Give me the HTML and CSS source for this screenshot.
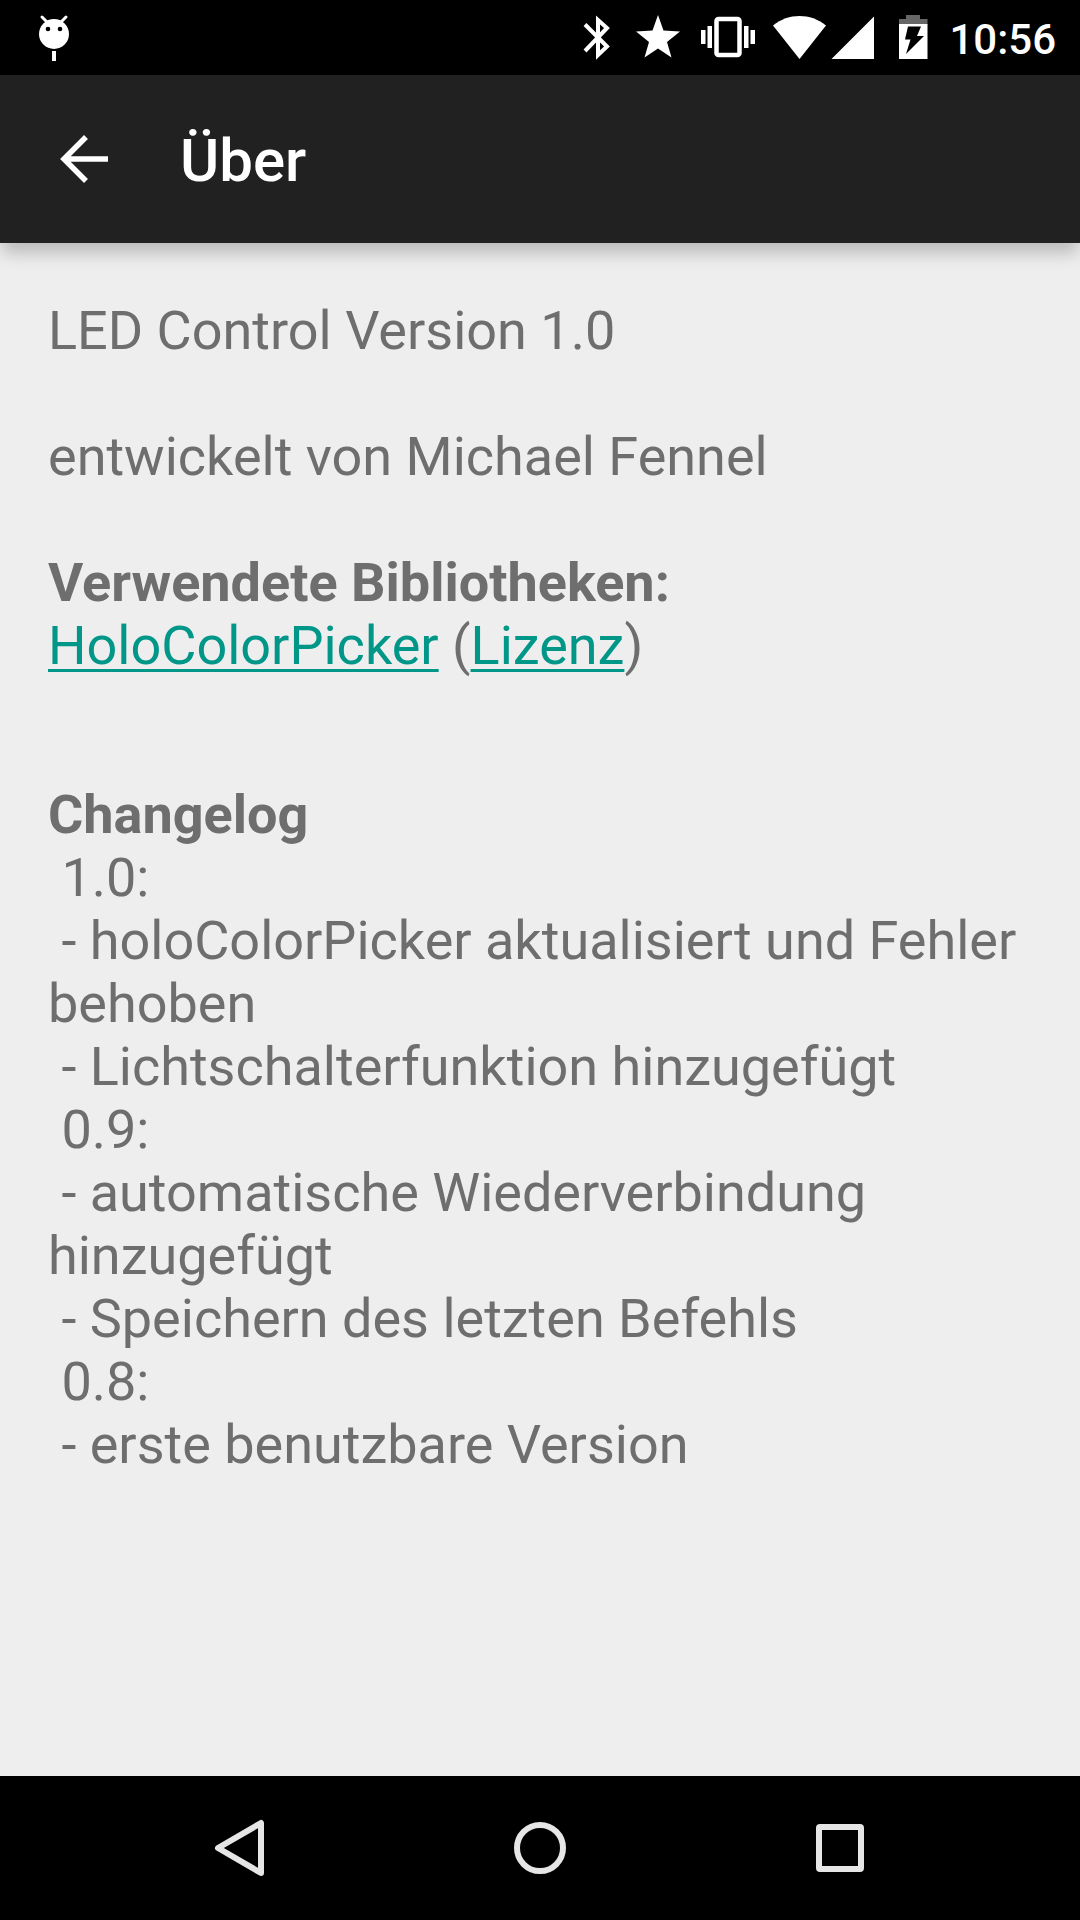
FILE: index.html
```html
<!DOCTYPE html>
<html lang="de">
  <head>
    <meta charset="UTF-8" />
    <meta name="viewport" content="width=device-width, initial-scale=1.0" />
    <title>Über</title>
    <link rel="stylesheet" href="styles.css">
  </head>
  <body>
    <!-- Status bar -->
    <div class="status-bar">
      <svg class="notification" width="32" height="75" viewBox="0 0 32 75" fill="#fff">
        <path d="M4 17l5 5M28 17l-5 5" stroke="#fff" stroke-width="3" stroke-linecap="round" />
        <circle cx="16" cy="34" r="15" />
        <circle cx="10" cy="29" r="2.3" fill="#000" />
        <circle cx="22" cy="29" r="2.3" fill="#000" />
        <rect x="14" y="51" width="4" height="10" />
      </svg>
      <div class="status-icons">
        <svg width="58" height="75" viewBox="0 0 58 75" fill="none" stroke="#fff" stroke-width="4">
          <path d="M17 24.500L39 46.500 30 55V20l9 8L17 51" />
        </svg>
        <svg width="64" height="75" viewBox="0 0 64 75" fill="#fff">
          <path d="M32 15l5.500 15.500L54 31.500 41 42l4.500 15.500L32 48.500 18.500 57.500 23 42 10 31.500 26.500 30.500z" />
        </svg>
        <svg width="74" height="75" viewBox="0 0 74 75" fill="#fff">
          <rect x="26.500" y="19" width="23" height="36" rx="2" fill="none" stroke="#fff" stroke-width="4.500" />
          <rect x="11" y="30" width="4.500" height="14" />
          <rect x="17.500" y="26" width="4.500" height="22" />
          <rect x="54" y="26" width="4.500" height="22" />
          <rect x="60.500" y="30" width="4.500" height="14" />
        </svg>
        <svg width="64" height="75" viewBox="0 0 64 75" fill="#fff">
          <path d="M35.500 59L9 25.500C17 19 26 16 35.500 16S54 19 62 25.500z" />
        </svg>
        <svg width="58" height="75" viewBox="0 0 58 75" fill="#fff">
          <path d="M46 16.500V59H3.500z" />
        </svg>
        <svg width="54" height="75" viewBox="0 0 54 75">
          <path d="M20 15h14v4h7.500v5.500H13V19h7z" fill="#666" />
          <rect x="13" y="24" width="28.500" height="35" fill="#fff" />
          <path d="M22 26.500h13l-4 9.500h7L20 54l4.500-14.500H19z" fill="#000" />
        </svg>
        <span class="clock">10:56</span>
      </div>
    </div>

    <!-- App bar -->
    <header class="app-bar">
      <button class="back" aria-label="Zurück">
        <svg width="48" height="48" viewBox="0 0 48 48" fill="none" stroke="#fff" stroke-width="5.500">
          <path d="M48 24H4M26 2L4 24l22 22" />
        </svg>
      </button>
      <h1>Über</h1>
    </header>

    <main class="content">
      <section class="about">
        <p>LED Control Version 1.0</p>
        <p>entwickelt von Michael Fennel</p>
        <h2>Verwendete Bibliotheken:</h2>
        <div><a href="#">HoloColorPicker</a> (<a href="#">Lizenz</a>)</div>
      </section>

      <section class="changelog">
        <h2>Changelog</h2>
        <div class="entry"> 1.0:</div>
        <div class="entry"> - holoColorPicker aktualisiert und Fehler behoben</div>
        <div class="entry"> - Lichtschalterfunktion hinzugefügt</div>
        <div class="entry"> 0.9:</div>
        <div class="entry"> - automatische Wiederverbindung hinzugefügt</div>
        <div class="entry"> - Speichern des letzten Befehls</div>
        <div class="entry"> 0.8:</div>
        <div class="entry"> - erste benutzbare Version</div>
      </section>
    </main>

    <!-- Navigation bar -->
    <nav class="nav-bar">
      <button aria-label="Zurück">
        <svg width="60" height="60" viewBox="0 0 60 60">
          <path d="M51 5v50L8 30z" />
        </svg>
      </button>
      <button aria-label="Startseite">
        <svg width="60" height="60" viewBox="0 0 60 60">
          <circle cx="30" cy="30" r="23" />
        </svg>
      </button>
      <button aria-label="Übersicht">
        <svg width="60" height="60" viewBox="0 0 60 60">
          <rect x="9" y="9" width="42" height="42" rx="1" />
        </svg>
      </button>
    </nav>
  </body>
</html>
```

FILE: styles.css
```css
body {
  margin: 0;
  min-height: 100vh;
  display: flex;
  flex-direction: column;
  background-color: #eee;
  color: #6e6e6e;
  font-family: Roboto, sans-serif;
}

svg {
  display: block;
}

button {
  padding: 0;
  border: none;
  background: none;
  cursor: pointer;
}

.status-bar {
  display: flex;
  justify-content: space-between;
  padding: 0 24px 0 38px;
  height: 75px;
  background-color: #000;
}

.status-icons {
  display: flex;
  align-items: center;
}

.clock {
  margin-left: 9px;
  color: white;
  font-size: 42px;
  font-weight: 500;
  line-height: 48px;
  padding-top: 4px;
}

.app-bar {
  display: flex;
  align-items: center;
  gap: 72px;
  height: 168px;
  padding: 0 60px;
  background-color: #212121;
  box-shadow: 0 12px 16px -2px rgba(0, 0, 0, 0.22);
}

.app-bar h1 {
  margin: 0;
  padding-top: 4px;
  color: white;
  font-size: 60px;
  font-weight: 500;
  line-height: 72px;
}

.content {
  flex: 1;
  padding: 56px 48px;
  font-size: 54px;
  line-height: 63px;
}

.content p {
  margin: 0 0 63px;
}

.content h2 {
  margin: 0;
  font-size: 54px;
  font-weight: 700;
}

.content a {
  color: #009688;
  text-decoration: underline;
  text-decoration-thickness: 3px;
  text-underline-offset: 5px;
  text-decoration-skip-ink: none;
}

.changelog {
  margin-top: 106px;
}

/* keeps the leading space of each line */
.entry {
  white-space: pre-wrap;
}

.nav-bar {
  display: flex;
  justify-content: center;
  height: 144px;
  background-color: #000;
}

.nav-bar button {
  flex: 0 1 300px;
  display: flex;
  justify-content: center;
  align-items: center;
}

.nav-bar svg {
  fill: none;
  stroke: #e6e6e6;
  stroke-width: 6px;
  stroke-linejoin: round;
}
```
